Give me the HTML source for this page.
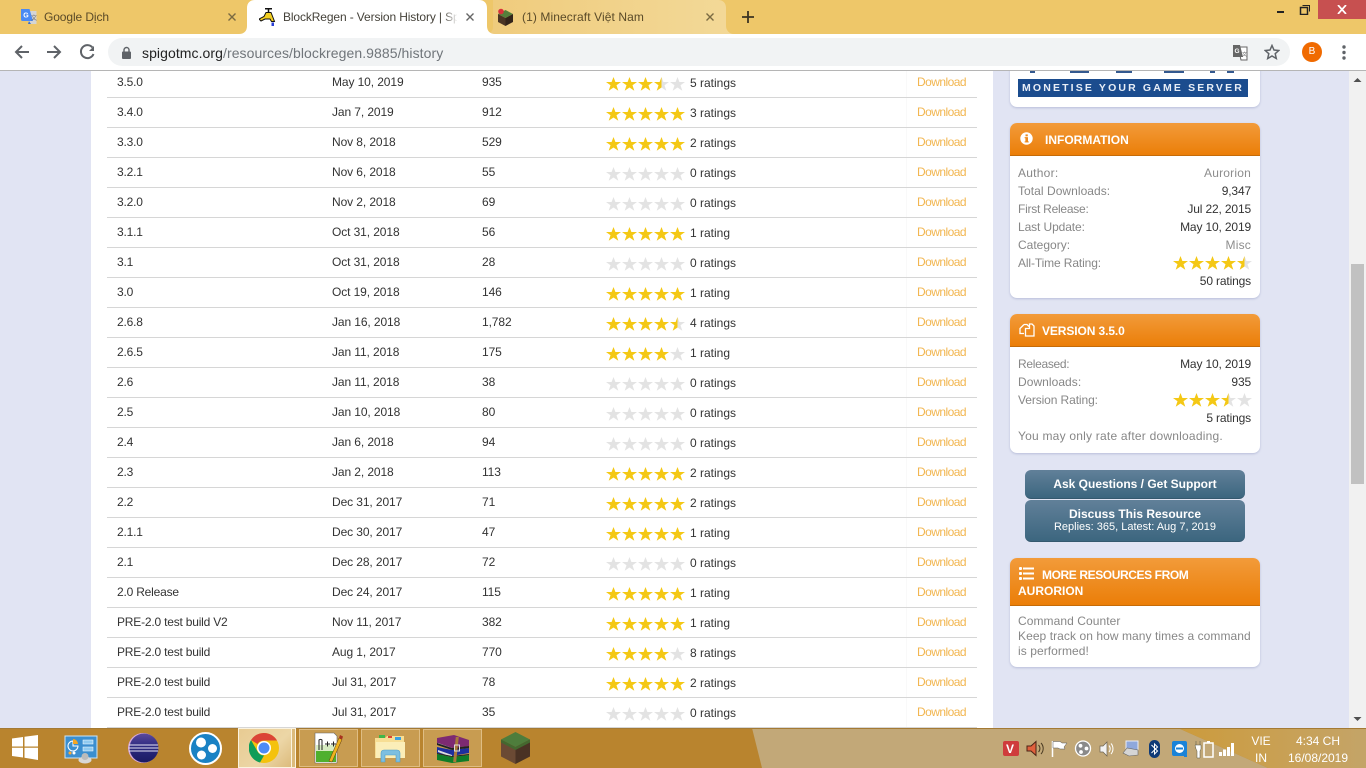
<!DOCTYPE html>
<html><head><meta charset="utf-8"><title>BlockRegen - Version History</title>
<style>
*{box-sizing:border-box}
html,body{margin:0;padding:0;width:1366px;height:768px;overflow:hidden;background:#e1e4f3;font-family:"Liberation Sans",sans-serif;font-size:12px;color:#333}
.a{position:absolute}
#page{position:absolute;left:0;top:71px;width:1366px;height:657px;overflow:hidden;background:#e1e4f3}
#white{position:absolute;left:91px;top:0;width:902px;height:657px;background:#fff}
#vline{position:absolute;left:906px;top:71px;width:1px;height:657px;background:#f9f9f9}
#rows{position:absolute;left:0;top:68px;width:1000px;height:660px;overflow:hidden}
.r{position:relative;height:30px;width:1000px}
.r:after{content:"";position:absolute;left:107px;width:870px;top:29px;height:1px;background:#d6d6d6}
.r span{position:absolute;top:0;line-height:28px;white-space:nowrap}
.r .c1{left:117px;letter-spacing:-.2px}.r .c2{left:332px;letter-spacing:-.1px}.r .c3{left:482px;letter-spacing:-.1px}
.r .c5{left:690px;top:1px}
.r .c6{left:917px;color:#f2b650;letter-spacing:-.55px}
.r svg{position:absolute;left:606px;top:9px}
#scroll{position:absolute;left:1349px;top:71px;width:17px;height:657px;background:#f1f1f1}
#thumb{position:absolute;left:1351px;top:264px;width:13px;height:220px;background:#c1c1c1}
.box{position:absolute;left:1010px;width:250px;background:#fff;border-radius:7px;box-shadow:0 1px 2px rgba(110,120,170,.35);overflow:hidden}
.hd{position:absolute;left:0;top:0;width:250px;background:linear-gradient(#f29b3a,#eb7e08);border-bottom:1px solid #c56b08;color:#fff;font-weight:bold;font-size:12px}
.l{position:absolute;left:8px;color:#878787;white-space:nowrap;line-height:18px}
.v{position:absolute;right:9px;color:#333;white-space:nowrap;line-height:18px;letter-spacing:-.15px;text-align:right}
.g{color:#8d8d8d;letter-spacing:.2px}
.btn{position:absolute;left:1025px;width:220px;background:linear-gradient(#618099,#3c667f);border-radius:6px;color:#fff;text-align:center;font-weight:bold;border-bottom:1px solid #34586e}
#tb{position:absolute;left:0;top:0;width:1366px;height:34px;background:#eec769}
#tool{position:absolute;left:0;top:34px;width:1366px;height:36px;background:#fff}
#sep{position:absolute;left:0;top:70px;width:1366px;height:1px;background:#b5b5b5}
.tt{position:absolute;top:0;line-height:34px;font-size:12px;white-space:nowrap;color:#5a4a28}
#task{position:absolute;left:0;top:728px;width:1366px;height:40px;overflow:hidden}
.tile{position:absolute;top:729px;height:38px;width:59px;background:rgba(255,240,210,.22);border:1px solid rgba(255,235,200,.42)}
.clock{position:absolute;color:#fff;font-size:12px;text-align:center;white-space:nowrap;line-height:14px}
</style></head><body>
<svg width="0" height="0" style="position:absolute">
<defs>
<linearGradient id="half"><stop offset=".5" stop-color="#f4c815"/><stop offset=".5" stop-color="#e3e3e3"/></linearGradient>
<polygon id="st" points="7.500,0 9.400,5 15,5 10.500,8.300 12.300,13.800 7.500,10.500 2.700,13.800 4.500,8.300 0,5 5.600,5"/>
<symbol id="s5" viewBox="0 0 80 14"><g fill="#f4c815"><use href="#st"/><use href="#st" x="16"/><use href="#st" x="32"/><use href="#st" x="48"/><use href="#st" x="64"/></g></symbol>
<symbol id="s0" viewBox="0 0 80 14"><g fill="#e3e3e3"><use href="#st"/><use href="#st" x="16"/><use href="#st" x="32"/><use href="#st" x="48"/><use href="#st" x="64"/></g></symbol>
<symbol id="s4" viewBox="0 0 80 14"><g fill="#f4c815"><use href="#st"/><use href="#st" x="16"/><use href="#st" x="32"/><use href="#st" x="48"/></g><use href="#st" x="64" fill="#e3e3e3"/></symbol>
<symbol id="s45" viewBox="0 0 80 14"><g fill="#f4c815"><use href="#st"/><use href="#st" x="16"/><use href="#st" x="32"/><use href="#st" x="48"/></g><g transform="translate(64 0)"><use href="#st" fill="url(#half)"/></g></symbol>
<symbol id="s35" viewBox="0 0 80 14"><g fill="#f4c815"><use href="#st"/><use href="#st" x="16"/><use href="#st" x="32"/></g><g transform="translate(48 0)"><use href="#st" fill="url(#half)"/></g><use href="#st" x="64" fill="#e3e3e3"/></symbol>
</defs></svg>

<div id="page"><div id="white"></div></div>
<div id="vline"></div>
<div id="rows">
<div class="r"><span class="c1">3.5.0</span><span class="c2">May 10, 2019</span><span class="c3">935</span><svg width="80" height="14"><use href="#s35"/></svg><span class="c5">5 ratings</span><span class="c6">Download</span></div>
<div class="r"><span class="c1">3.4.0</span><span class="c2">Jan 7, 2019</span><span class="c3">912</span><svg width="80" height="14"><use href="#s5"/></svg><span class="c5">3 ratings</span><span class="c6">Download</span></div>
<div class="r"><span class="c1">3.3.0</span><span class="c2">Nov 8, 2018</span><span class="c3">529</span><svg width="80" height="14"><use href="#s5"/></svg><span class="c5">2 ratings</span><span class="c6">Download</span></div>
<div class="r"><span class="c1">3.2.1</span><span class="c2">Nov 6, 2018</span><span class="c3">55</span><svg width="80" height="14"><use href="#s0"/></svg><span class="c5">0 ratings</span><span class="c6">Download</span></div>
<div class="r"><span class="c1">3.2.0</span><span class="c2">Nov 2, 2018</span><span class="c3">69</span><svg width="80" height="14"><use href="#s0"/></svg><span class="c5">0 ratings</span><span class="c6">Download</span></div>
<div class="r"><span class="c1">3.1.1</span><span class="c2">Oct 31, 2018</span><span class="c3">56</span><svg width="80" height="14"><use href="#s5"/></svg><span class="c5">1 rating</span><span class="c6">Download</span></div>
<div class="r"><span class="c1">3.1</span><span class="c2">Oct 31, 2018</span><span class="c3">28</span><svg width="80" height="14"><use href="#s0"/></svg><span class="c5">0 ratings</span><span class="c6">Download</span></div>
<div class="r"><span class="c1">3.0</span><span class="c2">Oct 19, 2018</span><span class="c3">146</span><svg width="80" height="14"><use href="#s5"/></svg><span class="c5">1 rating</span><span class="c6">Download</span></div>
<div class="r"><span class="c1">2.6.8</span><span class="c2">Jan 16, 2018</span><span class="c3">1,782</span><svg width="80" height="14"><use href="#s45"/></svg><span class="c5">4 ratings</span><span class="c6">Download</span></div>
<div class="r"><span class="c1">2.6.5</span><span class="c2">Jan 11, 2018</span><span class="c3">175</span><svg width="80" height="14"><use href="#s4"/></svg><span class="c5">1 rating</span><span class="c6">Download</span></div>
<div class="r"><span class="c1">2.6</span><span class="c2">Jan 11, 2018</span><span class="c3">38</span><svg width="80" height="14"><use href="#s0"/></svg><span class="c5">0 ratings</span><span class="c6">Download</span></div>
<div class="r"><span class="c1">2.5</span><span class="c2">Jan 10, 2018</span><span class="c3">80</span><svg width="80" height="14"><use href="#s0"/></svg><span class="c5">0 ratings</span><span class="c6">Download</span></div>
<div class="r"><span class="c1">2.4</span><span class="c2">Jan 6, 2018</span><span class="c3">94</span><svg width="80" height="14"><use href="#s0"/></svg><span class="c5">0 ratings</span><span class="c6">Download</span></div>
<div class="r"><span class="c1">2.3</span><span class="c2">Jan 2, 2018</span><span class="c3">113</span><svg width="80" height="14"><use href="#s5"/></svg><span class="c5">2 ratings</span><span class="c6">Download</span></div>
<div class="r"><span class="c1">2.2</span><span class="c2">Dec 31, 2017</span><span class="c3">71</span><svg width="80" height="14"><use href="#s5"/></svg><span class="c5">2 ratings</span><span class="c6">Download</span></div>
<div class="r"><span class="c1">2.1.1</span><span class="c2">Dec 30, 2017</span><span class="c3">47</span><svg width="80" height="14"><use href="#s5"/></svg><span class="c5">1 rating</span><span class="c6">Download</span></div>
<div class="r"><span class="c1">2.1</span><span class="c2">Dec 28, 2017</span><span class="c3">72</span><svg width="80" height="14"><use href="#s0"/></svg><span class="c5">0 ratings</span><span class="c6">Download</span></div>
<div class="r"><span class="c1">2.0 Release</span><span class="c2">Dec 24, 2017</span><span class="c3">115</span><svg width="80" height="14"><use href="#s5"/></svg><span class="c5">1 rating</span><span class="c6">Download</span></div>
<div class="r"><span class="c1">PRE-2.0 test build V2</span><span class="c2">Nov 11, 2017</span><span class="c3">382</span><svg width="80" height="14"><use href="#s5"/></svg><span class="c5">1 rating</span><span class="c6">Download</span></div>
<div class="r"><span class="c1">PRE-2.0 test build</span><span class="c2">Aug 1, 2017</span><span class="c3">770</span><svg width="80" height="14"><use href="#s4"/></svg><span class="c5">8 ratings</span><span class="c6">Download</span></div>
<div class="r"><span class="c1">PRE-2.0 test build</span><span class="c2">Jul 31, 2017</span><span class="c3">78</span><svg width="80" height="14"><use href="#s5"/></svg><span class="c5">2 ratings</span><span class="c6">Download</span></div>
<div class="r"><span class="c1">PRE-2.0 test build</span><span class="c2">Jul 31, 2017</span><span class="c3">35</span><svg width="80" height="14"><use href="#s0"/></svg><span class="c5">0 ratings</span><span class="c6">Download</span></div>
</div>

<!-- ad -->
<div class="box" style="top:40px;height:67px">
<div class="a" style="left:8px;top:31px;width:230px;height:2px;background:linear-gradient(90deg,transparent 0 12px,#34598f 12px 17px,transparent 17px 52px,#34598f 52px 71px,transparent 71px 98px,#34598f 98px 114px,transparent 114px 146px,#34598f 146px 166px,transparent 166px 192px,#34598f 192px 197px,transparent 197px 209px,#34598f 209px 216px,transparent 216px)"></div>
<div class="a" style="left:8px;top:39px;width:230px;height:18px;background:#1b4c8e;color:#e8eef7;font-weight:bold;font-size:10.5px;line-height:18px;letter-spacing:2.15px;padding-left:4px;white-space:nowrap;overflow:hidden">MONETISE YOUR GAME SERVER</div>
</div>

<!-- information -->
<div class="box" style="top:123px;height:175px">
<div class="hd" style="height:33px;line-height:35px;padding-left:35px">INFORMATION
<svg class="a" style="left:10px;top:9px" width="13" height="13" viewBox="0 0 13 13"><circle cx="6.500" cy="6.500" r="6.200" fill="#fff"/><rect x="5.400" y="5.200" width="2.600" height="5" fill="#ee8a1c"/><rect x="4.600" y="5.200" width="2" height="1" fill="#ee8a1c"/><rect x="4.600" y="9.400" width="4.200" height="1" fill="#ee8a1c"/><rect x="5.500" y="2.400" width="2.300" height="1.900" fill="#ee8a1c"/></svg></div>
<div class="l" style="top:41px;letter-spacing:.25px">Author:</div><div class="v g" style="top:41px">Aurorion</div>
<div class="l" style="top:59px;letter-spacing:.05px">Total Downloads:</div><div class="v" style="top:59px">9,347</div>
<div class="l" style="top:77px;letter-spacing:-.25px">First Release:</div><div class="v" style="top:77px">Jul 22, 2015</div>
<div class="l" style="top:95px;letter-spacing:-.1px">Last Update:</div><div class="v" style="top:95px">May 10, 2019</div>
<div class="l" style="top:113px">Category:</div><div class="v g" style="top:113px">Misc</div>
<div class="l" style="top:131px;letter-spacing:-.12px">All-Time Rating:</div>
<svg class="a" style="left:163px;top:133px" width="80" height="14"><use href="#s45"/></svg>
<div class="v" style="top:149px">50 ratings</div>
</div>

<!-- version -->
<div class="box" style="top:314px;height:139px">
<div class="hd" style="height:33px;line-height:35px;padding-left:32px;letter-spacing:-.1px">VERSION 3.5.0
<svg class="a" style="left:9px;top:9px" width="16" height="15" viewBox="0 0 16 15" fill="none" stroke="#fff" stroke-width="1.300"><path d="M5 1.500h3l2 2M5 1.500 1 5.500v5h4"/><path d="M6.500 5.500h4V1h2.500l2 2v10H6.500z" fill="#ee8a1c"/></svg></div>
<div class="l" style="top:41px;letter-spacing:-.3px">Released:</div><div class="v" style="top:41px">May 10, 2019</div>
<div class="l" style="top:59px;letter-spacing:.05px">Downloads:</div><div class="v" style="top:59px">935</div>
<div class="l" style="top:77px;letter-spacing:-.1px">Version Rating:</div>
<svg class="a" style="left:163px;top:79px" width="80" height="14"><use href="#s35"/></svg>
<div class="v" style="top:95px">5 ratings</div>
<div class="l" style="top:113px;letter-spacing:.22px">You may only rate after downloading.</div>
</div>

<div class="btn" style="top:470px;height:29px;line-height:28px;font-size:12px">Ask Questions / Get Support</div>
<div class="btn" style="top:500px;height:42px;padding-top:7px;line-height:14px;font-size:12px">Discuss This Resource<div style="font-weight:normal;font-size:11px;line-height:13px">Replies: 365, Latest: Aug 7, 2019</div></div>

<!-- more -->
<div class="box" style="top:558px;height:109px">
<div class="hd" style="height:48px;line-height:16px;padding:9px 8px 0"><span style="padding-left:24px;letter-spacing:-.4px">MORE RESOURCES FROM</span><br>AURORION
<svg class="a" style="left:9px;top:9px" width="15" height="13" viewBox="0 0 15 13" fill="#fff"><rect x="0" y="0" width="3" height="3" rx="1"/><rect x="0" y="5" width="3" height="3" rx="1"/><rect x="0" y="10" width="3" height="3" rx="1"/><rect x="4" y=".5" width="11" height="2"/><rect x="4" y="5.500" width="11" height="2"/><rect x="4" y="10.500" width="11" height="2"/></svg></div>
<div class="l" style="top:56px;line-height:15px;letter-spacing:.07px">Command Counter<br>Keep track on how many times a command<br>is performed!</div>
</div>

<div id="scroll"></div><div id="thumb"></div>
<svg class="a" style="left:1349px;top:71px" width="17" height="657"><path d="M4.500 11 8.500 7 12.500 11z" fill="#505050"/><path d="M4.500 646h8l-4 4z" fill="#505050"/></svg>

<!-- tab bar -->
<div id="tb"></div>
<svg class="a" style="left:0;top:0" width="1366" height="34">
<defs><linearGradient id="t3"><stop offset="0" stop-color="#efcb7c"/><stop offset="1" stop-color="#f3d998"/></linearGradient></defs>
<path d="M486 34c4 0 7-3 7-7V0h225c5 0 8 3 8 8v18c0 4 3 8 8 8z" fill="url(#t3)"/>
<path d="M239 34c5 0 8-3 8-8V8c0-5 3-8 8-8h224c5 0 8 3 8 8v18c0 5 3 8 8 8z" fill="#fff"/>
</svg>
<!-- Google translate favicon -->
<svg class="a" style="left:20px;top:8px" width="17" height="17" viewBox="0 0 17 17"><path d="M7 3h9.500v13H9z" fill="#d5d5d5"/><path d="M1 1h8.500l3.500 12H2.500C1.500 13 1 12.500 1 11.500z" fill="#4a8af4"/><path d="M9 13l-1 3h3z" fill="#3b6fc9"/><text x="3.200" y="9.500" font-size="7" font-weight="bold" fill="#fff" font-family="Liberation Sans">G</text><text x="11" y="12" font-size="6" fill="#666" font-family="Liberation Sans">文</text></svg>
<div class="tt" style="left:44px;letter-spacing:-.1px">Google Dịch</div>
<svg class="a" style="left:228px;top:13px" width="8" height="8" viewBox="0 0 8 8" stroke="#7a6a42" stroke-width="1.400"><path d="M.5.500l7 7M7.500.500l-7 7"/></svg>
<!-- faucet -->
<svg class="a" style="left:259px;top:8px" width="18" height="19" viewBox="0 0 18 19"><path d="M6 .8h7M9.500 1v3" stroke="#111" stroke-width="1.500" fill="none"/><path d="M0 11l5-2.500 2-4h5l2 5 1.500 4h-3L11 11H6l-4 2z" fill="#f3cf22" stroke="#111"/><rect x="12.500" y="14.500" width="2.500" height="3.500" fill="#2b3fd6"/></svg>
<div class="tt" style="left:283px;width:174px;overflow:hidden;color:#45423a;letter-spacing:-.12px">BlockRegen - Version History | Spigot</div>
<div class="a" style="left:443px;top:5px;width:15px;height:26px;background:linear-gradient(90deg,rgba(255,255,255,0),#fff)"></div>
<svg class="a" style="left:466px;top:13px" width="8" height="8" viewBox="0 0 8 8" stroke="#666" stroke-width="1.400"><path d="M.5.500l7 7M7.500.500l-7 7"/></svg>
<!-- minecraft favicon -->
<svg class="a" style="left:497px;top:8px" width="17" height="18" viewBox="0 0 17 18"><path d="M8.500 2 16 6l-7.500 4L1 6z" fill="#557f3b"/><path d="M1 6l7.500 4v8L1 14z" fill="#4b3524"/><path d="M16 6l-7.500 4v8l7.500-4z" fill="#33241a"/><circle cx="4" cy="3.500" r="2.800" fill="#d9323a"/></svg>
<div class="tt" style="left:522px;color:#5a4a28;letter-spacing:.1px">(1) Minecraft Việt Nam</div>
<svg class="a" style="left:706px;top:13px" width="8" height="8" viewBox="0 0 8 8" stroke="#7a6a42" stroke-width="1.400"><path d="M.5.500l7 7M7.500.500l-7 7"/></svg>
<svg class="a" style="left:742px;top:11px" width="12" height="12" viewBox="0 0 12 12" stroke="#3c3422" stroke-width="1.800"><path d="M6 0v12M0 6h12"/></svg>
<!-- window controls -->
<div class="a" style="left:1277px;top:11px;width:7px;height:2px;background:#222"></div>
<svg class="a" style="left:1299px;top:4px" width="12" height="11" viewBox="0 0 12 11" fill="none" stroke="#222"><rect x="1.500" y="3.500" width="7" height="7" stroke-width="1.500"/><path d="M3.500 1.500h7v6" stroke-width="1"/></svg>
<div class="a" style="left:1318px;top:0;width:48px;height:19px;background:#c75050"></div>
<svg class="a" style="left:1337px;top:5px" width="10" height="9" viewBox="0 0 10 9" stroke="#fff" stroke-width="1.700"><path d="M1 0l8 9M9 0l-8 9"/></svg>

<!-- toolbar -->
<div id="tool"></div>
<div id="sep"></div>
<svg class="a" style="left:13px;top:43px" width="90" height="18" viewBox="0 0 90 18" fill="none" stroke="#5f6368" stroke-width="2"><path d="M16 9H3M9 3 3 9l6 6"/><path d="M34 9h13M41 3l6 6-6 6"/><path d="M79.500 4.500A6.500 6.500 0 1 0 80.500 11"/><path d="M81 3v5h-5z" fill="#5f6368" stroke="none"/></svg>
<div class="a" style="left:108px;top:38px;width:1182px;height:28px;background:#f1f3f4;border-radius:14px"></div>
<svg class="a" style="left:121px;top:46px" width="11" height="13" viewBox="0 0 11 13"><path d="M3 6V4a2.500 2.500 0 0 1 5 0v2" fill="none" stroke="#5f6368" stroke-width="1.400"/><rect x="1" y="5.500" width="9" height="7.500" rx="1" fill="#5f6368"/></svg>
<div class="a" style="left:142px;top:39px;line-height:28px;font-size:14px;letter-spacing:.07px;white-space:nowrap;color:#222">spigotmc.org<span style="color:#70757a">/resources/blockregen.9885/history</span></div>
<svg class="a" style="left:1232px;top:44px" width="16" height="17" viewBox="0 0 16 17"><path d="M6 3h9v13H9z" fill="#fff" stroke="#666"/><path d="M1 1h7l3 12H1z" fill="#666"/><text x="2.500" y="9" font-size="6.500" font-weight="bold" fill="#fff" font-family="Liberation Sans">G</text><text x="10" y="12" font-size="5" fill="#555" font-family="Liberation Sans">文</text></svg>
<svg class="a" style="left:1264px;top:44px" width="16" height="16" viewBox="0 0 16 16" fill="none" stroke="#5f6368" stroke-width="1.500"><path d="M8 1.500l2 4.500 4.800.5-3.600 3.200 1.100 4.800L8 12l-4.300 2.500 1.100-4.800L1.200 6.500 6 6z"/></svg>
<div class="a" style="left:1302px;top:42px;width:20px;height:20px;border-radius:50%;background:#f06a00;color:#fff;font-size:10px;line-height:20px;text-align:center">B</div>
<svg class="a" style="left:1342px;top:45px" width="4" height="16" fill="#5f6368"><circle cx="2" cy="2" r="1.700"/><circle cx="2" cy="7.500" r="1.700"/><circle cx="2" cy="13" r="1.700"/></svg>

<!-- taskbar -->
<div id="task">
<svg width="1366" height="40" style="position:absolute;left:0;top:0">
<defs><linearGradient id="gold"><stop offset="0" stop-color="#cc9b3c"/><stop offset=".5" stop-color="#c9a052"/><stop offset="1" stop-color="#c4a468"/></linearGradient></defs>
<rect width="1366" height="40" fill="#b9842e"/>
<polygon points="752,0 1178,0 1268,40 762,40" fill="#c2a878"/>
<polygon points="1178,0 1366,0 1366,40 1268,40" fill="url(#gold)"/>
<rect y="0" width="1366" height="1" fill="#a47a34"/>
</svg>
</div>
<svg class="a" style="left:12px;top:735px" width="27" height="25" viewBox="0 0 27 25" fill="#fff"><path d="M0 3.500 11 2v9.500H0z"/><path d="M12.500 1.800 26 0v11.500H12.500z"/><path d="M0 12.800h11v9.700L0 21z"/><path d="M12.500 12.800H26V25l-13.500-2.200z"/></svg>
<!-- control panel -->
<svg class="a" style="left:64px;top:735px" width="34" height="29" viewBox="0 0 34 29"><rect x="1" y="1" width="32" height="22" fill="#3b8fd0" stroke="#cde4f5"/><path d="M9 6a5 5 0 1 0 5 5H9z" fill="none" stroke="#fff"/><path d="M9 4a5 5 0 0 1 5 5H9z" fill="#f5a623"/><rect x="19" y="5" width="10" height="4" fill="#8fcaf0" stroke="#fff" stroke-width=".5"/><rect x="19" y="12" width="10" height="4" fill="#8fcaf0" stroke="#fff" stroke-width=".5"/><circle cx="6" cy="18" r="1.500" fill="#fa3"/><circle cx="10" cy="18" r="1.500" fill="#fff"/><ellipse cx="21" cy="25" rx="6.500" ry="3.500" fill="#d8d8d8"/><circle cx="21" cy="21.500" r="3.500" fill="#bbb"/></svg>
<!-- eclipse -->
<svg class="a" style="left:127px;top:733px" width="32" height="30" viewBox="0 0 32 30"><defs><linearGradient id="ec" x1="0" y1="0" x2="0" y2="1"><stop offset="0" stop-color="#5c4a9c"/><stop offset=".45" stop-color="#2c2a80"/><stop offset="1" stop-color="#1b1a62"/></linearGradient></defs><circle cx="16" cy="15" r="15" fill="#d7a8d8"/><circle cx="17" cy="15" r="14.500" fill="url(#ec)"/><path d="M2 12h29M1.500 15h30M2 18h29" stroke="#e7e5f5" stroke-width="1"/></svg>
<!-- blue circle -->
<svg class="a" style="left:189px;top:732px" width="33" height="33" viewBox="0 0 33 33"><circle cx="16.500" cy="16.500" r="15.500" fill="#1a82c4" stroke="#fff" stroke-width="2"/><circle cx="12" cy="10.500" r="5" fill="#fff"/><circle cx="23.500" cy="16.500" r="4.500" fill="#fff"/><circle cx="12.500" cy="23" r="4.500" fill="#fff"/></svg>
<!-- chrome tile -->
<div class="a" style="left:238px;top:728px;width:54px;height:40px;background:linear-gradient(135deg,#e8cb92,#ecd6a6 60%,#dcbb7c);border:1px solid #fbf3e0"></div>
<div class="a" style="left:292px;top:728px;width:4px;height:40px;background:#dcbb7c;border:1px solid #fbf3e0;border-left:0"></div>
<svg class="a" style="left:249px;top:733px" width="30" height="30" viewBox="0 0 30 30"><circle cx="15" cy="15" r="15" fill="#f4c20d"/><path d="M15 0A15 15 0 0 1 28 7.500H15A7.500 7.500 0 0 0 8.500 11L2 7A15 15 0 0 1 15 0" fill="#db4437"/><path d="M2 7 8.500 18.500A7.500 7.500 0 0 0 15 22.500L11 29.500A15 15 0 0 1 2 7" fill="#0f9d58"/><circle cx="15" cy="15" r="7" fill="#fff"/><circle cx="15" cy="15" r="5.500" fill="#4c8bf5"/></svg>
<div class="tile" style="left:299px"></div><div class="tile" style="left:361px"></div><div class="tile" style="left:423px"></div>
<!-- notepad++ -->
<svg class="a" style="left:313px;top:731px" width="32" height="33" viewBox="0 0 32 33"><path d="M2 2h19l3 3v27H2z" fill="#fff" stroke="#666" stroke-width=".6"/><rect x="3" y="20" width="20" height="11" fill="#4fb02e"/><rect x="3" y="14" width="20" height="6" fill="#d7ecc2"/><path d="M6 19V9a2 2 0 0 1 3 0v10M12 13h5M14.500 10.500v5M18 13h5M20.500 10.500v5" fill="none" stroke="#222"/><path d="M16 30 26 7l3 1.500L19 31z" fill="#efb21f" stroke="#5c3a10" stroke-width=".5"/><path d="M26 7l1-3 3 1.500-1 3z" fill="#a8331f"/></svg>
<!-- folder -->
<svg class="a" style="left:375px;top:733px" width="31" height="30" viewBox="0 0 31 30"><path d="M0 5h10l2-2h17v22H0z" fill="#f7de94"/><path d="M1 9h29v16H1z" fill="#fbeeb8"/><rect x="4" y="2" width="6" height="3" fill="#41b649"/><rect x="20" y="4" width="6" height="3" fill="#3aa0e0"/><rect x="13" y="3" width="4" height="2" fill="#dd4433"/><path d="M6 29v-9a3 3 0 0 1 3-3h13a3 3 0 0 1 3 3v9h-4v-7H10v7z" fill="#7dbfe0" stroke="#4f9dc8" stroke-width=".6"/></svg>
<!-- winrar -->
<svg class="a" style="left:437px;top:735px" width="33" height="28" viewBox="0 0 33 28"><path d="M0 3 17 0l15 5v6L15 13 0 8z" fill="#7d2a72"/><path d="M0 12l15 3 17-2v5l-17 3-15-3z" fill="#1d2f9e"/><path d="M0 19l15 3 17-2v6l-17 2-15-3z" fill="#0f7d28"/><path d="M1 8l14 5v2L1 10zM1 15l14 5v2L1 17z" fill="#ddd"/><path d="M0 8l15 5 17-2v2L15 15 0 10zM0 18l15 3 17-2v1l-17 2-15-3z" fill="#222"/><rect x="19" y="2" width="3" height="25" fill="#a9793b" transform="skewX(-6)"/><rect x="17.500" y="10" width="5" height="6" fill="none" stroke="#ddd"/></svg>
<!-- minecraft -->
<svg class="a" style="left:500px;top:731px" width="31" height="34" viewBox="0 0 31 34"><path d="M15.500 1 30 8.500 15.500 16 1 8.500z" fill="#4e7d3c"/><path d="M1 8.500 15.500 16v17L1 25.500z" fill="#6b4a34"/><path d="M30 8.500 15.500 16v17L30 25.500z" fill="#4a3224"/><path d="M1 8.500 15.500 16 30 8.500v3L15.500 19 1 11.500z" fill="#44682f"/></svg>
<!-- tray -->
<svg class="a" style="left:1000px;top:738px" width="240" height="22" viewBox="0 0 240 22">
<rect x="3" y="3" width="16" height="15" rx="2" fill="#cf3c3c"/><text x="6" y="15" font-size="12" font-weight="bold" fill="#fff" font-family="Liberation Sans">V</text>
<path d="M27 8h4l5-4.500v14L31 13h-4z" fill="#e0603c" stroke="#4a2416" stroke-width="1"/><path d="M38.500 7a5 5 0 0 1 0 7M41 5a8 8 0 0 1 0 11" fill="none" stroke="#4a3a22"/>
<path d="M52.500 3v16" stroke="#fff" stroke-width="1.500" fill="none"/><path d="M53 3.500h7l2 1.500h5l-3 4 1 2h-5l-2-1h-5z" fill="#fff" stroke="#555" stroke-width=".5"/>
<circle cx="83" cy="10.500" r="7.500" fill="#8a8a8a" stroke="#fff" stroke-width="1.300"/><circle cx="80.500" cy="7.800" r="1.900" fill="#fff"/><circle cx="86.500" cy="10.500" r="1.900" fill="#fff"/><circle cx="81" cy="14" r="1.900" fill="#fff"/>
<path d="M100 8h3l4-4v14l-4-4h-3z" fill="#f3f3f3" stroke="#6b6250" stroke-width=".7"/><path d="M109 7.500a5 5 0 0 1 0 6.500M111 5.500a8 8 0 0 1 0 10.500" fill="none" stroke="#fff"/>
<rect x="126" y="3" width="12" height="9" fill="#8fa8dc" stroke="#e9edf6"/><path d="M123 15l4-5 11 2v5l-9 1z" fill="#d5d5d5" stroke="#666" stroke-width=".6"/>
<rect x="149" y="2" width="11" height="18" rx="5.500" fill="#0e3a77"/><path d="M151.500 7l6 6-3 3V6l3 3-6 6" fill="none" stroke="#fff"/>
<rect x="172" y="3" width="15" height="15" rx="2" fill="#1a83d8"/><rect x="175" y="6" width="9" height="9" rx="4.500" fill="#fff"/><path d="M176 10.500h7" stroke="#1a83d8" stroke-width="2"/><rect x="184" y="17" width="3" height="2" fill="#1a83d8"/>
<path d="M196 3v4M200 3v4M195 7h6v4l-1 2v7h-3v-7l-1-2z" fill="#fff" stroke="#554" stroke-width=".5"/><rect x="204" y="5" width="9" height="14" fill="none" stroke="#fff" stroke-width="1.500"/><rect x="207" y="3" width="3" height="2" fill="#fff"/>
<g fill="#fff"><rect x="219" y="14" width="3" height="4"/><rect x="223" y="11.500" width="3" height="6.500"/><rect x="227" y="9" width="3" height="9"/><rect x="231" y="5" width="3" height="13"/></g>
</svg>
<div class="clock" style="left:1241px;top:734px;width:40px">VIE</div>
<div class="clock" style="left:1241px;top:751px;width:40px">IN</div>
<div class="clock" style="left:1278px;top:734px;width:80px">4:34 CH</div>
<div class="clock" style="left:1278px;top:751px;width:80px">16/08/2019</div>
</body></html>
